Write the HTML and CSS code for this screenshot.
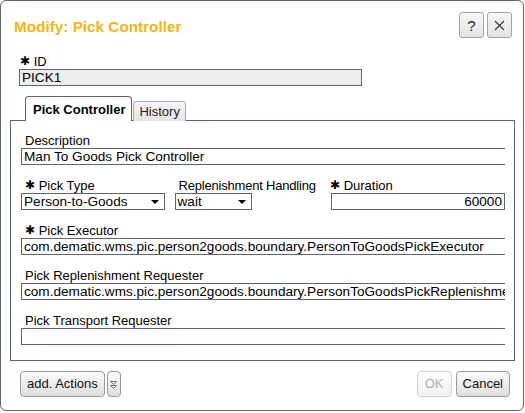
FILE: index.html
```html
<!DOCTYPE html>
<html>
<head>
<meta charset="utf-8">
<link rel="stylesheet" href="styles.css">
</head>
<body>
<div class="dialog">
  <div class="header">
    <div class="title">Modify: Pick Controller</div>
    <div class="hbtns">
      <div class="hbtn">?</div>
      <div class="hbtn close">
        <svg width="11" height="11" viewBox="0 0 11 11"><path d="M1 1L10 10M10 1L1 10" stroke="#333" stroke-width="1.1" fill="none"/></svg>
      </div>
    </div>
  </div>
  <div class="idblock">
    <div class="lbl"><span class="star">✱</span> ID</div>
    <div class="inp idinp">PICK1</div>
  </div>
  <div class="tabs">
    <div class="tab active">Pick Controller</div>
    <div class="tab">History</div>
  </div>
  <div class="panel">
    <div class="fields">
      <div class="field">
        <div class="lbl">Description</div>
        <div class="inp desc">Man To Goods Pick Controller</div>
      </div>
      <div class="field row3">
        <div class="col c1">
          <div class="lbl"><span class="star">✱</span> Pick Type</div>
          <div class="sel s1">Person-to-Goods<span class="arrow"></span></div>
        </div>
        <div class="col c2">
          <div class="lbl lbl2">Replenishment Handling</div>
          <div class="sel s2">wait<span class="arrow"></span></div>
        </div>
        <div class="col c3">
          <div class="lbl"><span class="star">✱</span> Duration</div>
          <div class="inp num">60000</div>
        </div>
      </div>
      <div class="field">
        <div class="lbl"><span class="star">✱</span> Pick Executor</div>
        <div class="inp wide">com.dematic.wms.pic.person2goods.boundary.PersonToGoodsPickExecutor</div>
      </div>
      <div class="field">
        <div class="lbl">Pick Replenishment Requester</div>
        <div class="inp wide">com.dematic.wms.pic.person2goods.boundary.PersonToGoodsPickReplenishmentRequester</div>
      </div>
      <div class="field">
        <div class="lbl">Pick Transport Requester</div>
        <div class="inp wide"></div>
      </div>
    </div>
  </div>
  <div class="footer">
    <div class="left">
      <div class="btn">add. Actions</div>
      <div class="btn mini">
        <svg width="7" height="9" viewBox="0 0 7 9"><path d="M0.5 1.5H6.5L3.5 4.5Z M0.5 5.5H6.5L3.5 8.5Z" fill="none" stroke="#555" stroke-width="0.8"/></svg>
      </div>
    </div>
    <div class="right">
      <div class="btn disabled">OK</div>
      <div class="btn">Cancel</div>
    </div>
  </div>
</div>
</body>
</html>
```

FILE: styles.css
```css
html, body {
  margin: 0;
  padding: 0;
  background: #fff;
}
body {
  font-family: "Liberation Sans", Arial, sans-serif;
  font-size: 13px;
  color: #000;
}
.dialog {
  box-sizing: border-box;
  width: 524px;
  height: 411px;
  border: 1px solid #5c6478;
  border-radius: 6px;
  display: flex;
  flex-direction: column;
}
.header {
  display: flex;
  justify-content: space-between;
  align-items: flex-start;
  padding: 11px 11px 0 13px;
  height: 26px;
}
.title {
  color: #f5b50f;
  font-weight: bold;
  font-size: 15.3px;
  line-height: 17px;
  margin-top: 6px;
}
.hbtns {
  display: flex;
  gap: 3px;
}
.hbtn {
  box-sizing: border-box;
  width: 25px;
  height: 26px;
  border: 1px solid #a3a3a3;
  border-radius: 3px;
  background: linear-gradient(#f8f8f8, #e2e2e2);
  display: flex;
  align-items: center;
  justify-content: center;
  font-size: 15px;
  color: #222;
}
.idblock {
  padding: 16px 0 0 18px;
}
.lbl {
  height: 15px;
  line-height: 15px;
  padding-left: 1px;
  white-space: nowrap;
}
.star {
  font-family: "DejaVu Sans", sans-serif;
  font-size: 12px;
  font-weight: bold;
  position: relative;
  top: -1px;
}
.inp {
  box-sizing: border-box;
  height: 17px;
  line-height: 15px;
  border: 1px solid #5c6478;
  padding: 0 2px;
  white-space: nowrap;
  overflow: hidden;
  font-size: 13.6px;
}
.idinp {
  width: 343px;
  background: #eeeeee;
}
.tabs {
  display: flex;
  align-items: flex-end;
  gap: 1px;
  padding-left: 24px;
  margin-top: 10px;
  height: 25px;
  position: relative;
  z-index: 1;
  margin-bottom: -1px;
}
.tab {
  box-sizing: border-box;
  height: 20px;
  line-height: 19px;
  padding: 0 5px;
  border: 1px solid #a8a8a8;
  border-bottom: none;
  border-radius: 4px 4px 0 0;
  background: linear-gradient(#f6f6f6, #e4e4e4);
  color: #222;
}
.tab.active {
  height: 25px;
  line-height: 26px;
  padding: 0 6px 0 7px;
  font-weight: bold;
  background: #fff;
  border-color: #5c6478;
  color: #000;
}
.panel {
  margin: 0 8px 0 9px;
  height: 241px;
  box-sizing: border-box;
  border: 1px solid #5c6478;
  padding: 12px 0 0 10px;
}
.fields {
  width: 484px;
  overflow: hidden;
}
.field {
  margin-bottom: 13px;
}
.field .lbl {
  padding-left: 4px;
}
.desc {
  width: 486px;
}
.wide {
  width: 500px;
  border-right: none;
}
.row3 {
  display: flex;
}
.c1 {
  width: 154px;
}
.c2 {
  width: 156px;
}
.c2 .lbl {
  padding-left: 4px;
  letter-spacing: -0.2px;
}
.c3 .lbl {
  padding-left: 0;
}
.sel {
  box-sizing: border-box;
  height: 17px;
  line-height: 15px;
  border: 1px solid #5c6478;
  padding: 0 2px;
  position: relative;
  white-space: nowrap;
  font-size: 13.6px;
}
.s1 { width: 144px; }
.s2 { width: 77px; }
.arrow {
  position: absolute;
  right: 5px;
  top: 6px;
  width: 0;
  height: 0;
  border-left: 4px solid transparent;
  border-right: 4px solid transparent;
  border-top: 4px solid #000;
}
.num {
  width: 174px;
  text-align: right;
  margin-left: 1px;
}
.footer {
  display: flex;
  justify-content: space-between;
  padding: 10px 13px 0 19px;
}
.left, .right {
  display: flex;
  gap: 3px;
}
.right {
  gap: 4px;
}
.btn {
  box-sizing: border-box;
  height: 26px;
  line-height: 24px;
  padding: 0 6px;
  border: 1px solid #9a9a9a;
  border-radius: 4px;
  background: linear-gradient(#fbfbfb, #dedede);
  color: #111;
}
.btn.mini {
  width: 14px;
  padding: 0;
  display: flex;
  align-items: center;
  justify-content: center;
  margin-left: -1px;
}
.btn.disabled {
  color: #b0b0b0;
  border-color: #cfcfcf;
  background: linear-gradient(#fdfdfd, #f1f1f1);
  padding: 0 7px;
}
```
